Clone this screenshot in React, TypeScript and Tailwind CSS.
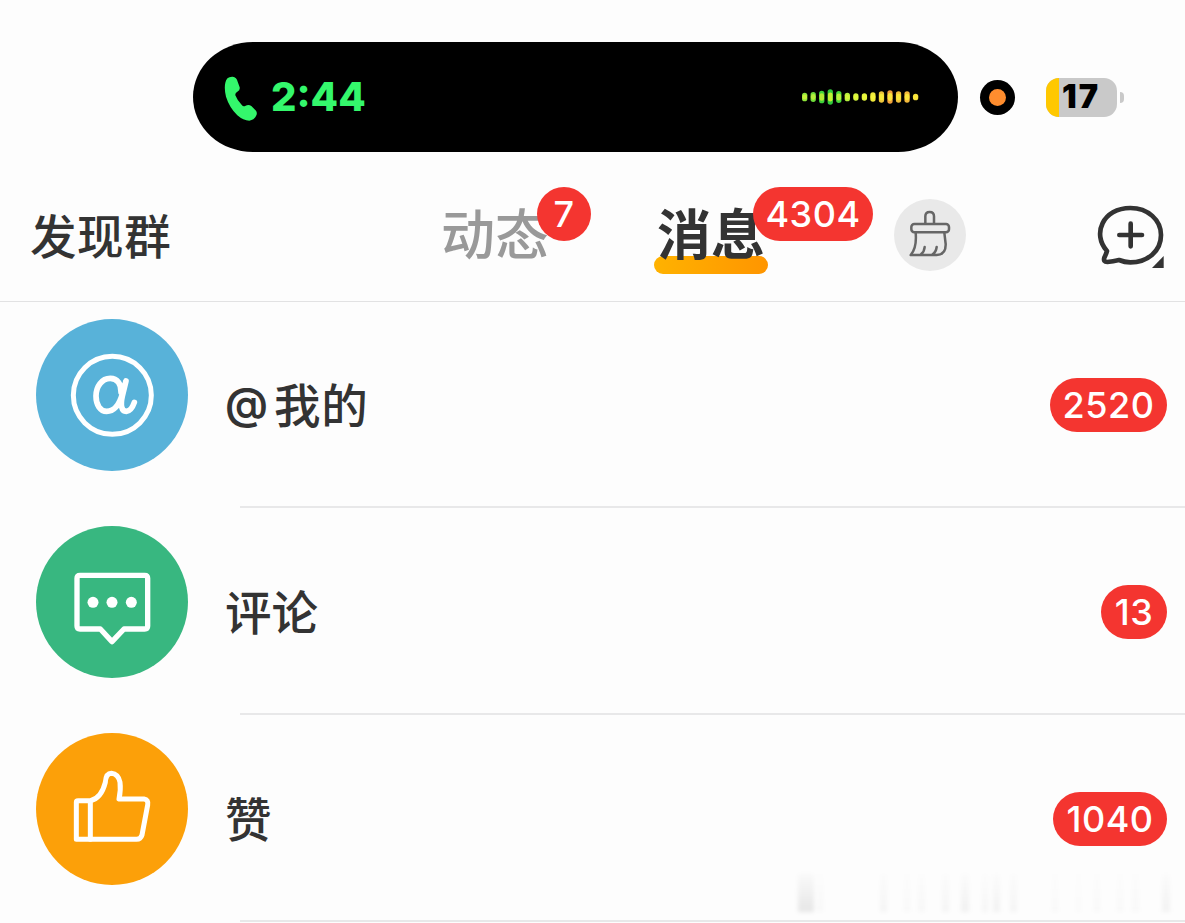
import type { ReactNode } from 'react';
import clsx from 'clsx';

const WAVE = [
  { h: 26, outer: '#8fe53a', inner: '#c8f23c' },
  { h: 30, outer: '#6fdc3a', inner: '#b6ee3c' },
  { h: 38, outer: '#3fd23a', inner: '#b4ea34' },
  { h: 46, outer: '#2fc83a', inner: '#c2ee34' },
  { h: 36, outer: '#46d63a', inner: '#b6ee3c' },
  { h: 26, outer: '#b4ee3c', inner: '#d2f43c' },
  { h: 22, outer: '#d2f43c', inner: '#e2f63c' },
  { h: 22, outer: '#e2f63c', inner: '#eaf63c' },
  { h: 28, outer: '#eee63a', inner: '#f6f23c' },
  { h: 34, outer: '#eec63a', inner: '#f8ea3c' },
  { h: 40, outer: '#f0a03c', inner: '#fae63c' },
  { h: 34, outer: '#f0c03a', inner: '#f8e63c' },
  { h: 34, outer: '#f2b83a', inner: '#fae43c' },
  { h: 20, outer: '#f6e03a', inner: '#fae63c' },
];

const SMUDGES = [
  { x: 18, w: 16, o: 0.09 },
  { x: 38, w: 5, o: 0.025 },
  { x: 100, w: 7, o: 0.035 },
  { x: 124, w: 6, o: 0.02 },
  { x: 138, w: 7, o: 0.025 },
  { x: 162, w: 7, o: 0.035 },
  { x: 181, w: 8, o: 0.05 },
  { x: 202, w: 6, o: 0.03 },
  { x: 213, w: 7, o: 0.045 },
  { x: 230, w: 7, o: 0.035 },
  { x: 272, w: 6, o: 0.02 },
  { x: 296, w: 5, o: 0.015 },
  { x: 314, w: 6, o: 0.02 },
  { x: 337, w: 6, o: 0.02 },
  { x: 352, w: 7, o: 0.02 },
  { x: 382, w: 8, o: 0.045 },
];

function PhoneIcon() {
  return (
    <svg width="34" height="46" viewBox="132 138 102 138" fill="#34f76c">
      <path d="M136 158Q139 139 158 140Q170 142 173 155L179 172Q181 181 172 185Q165 189 166 196Q172 212 186 226Q190 231 197 227Q206 222 214 228L228 242Q233 249 228 258Q222 270 208 272Q190 272 172 256Q148 232 138 200Q132 175 136 158Z" />
    </svg>
  );
}

function Waveform() {
  return (
    <svg width="120" height="18" viewBox="64 172 360 54">
      {WAVE.map((bar, i) => {
        const x = 75 + i * 25.6;
        return (
          <g key={i}>
            <rect x={x - 8} y={199 - bar.h / 2} width="16" height={bar.h} rx="8" fill={bar.outer} />
            <rect x={x - 7} y={199 - bar.h / 3.4} width="14" height={bar.h / 1.7} rx="7" fill={bar.inner} />
          </g>
        );
      })}
    </svg>
  );
}

function StatusBar() {
  return (
    <div className="flex h-[170px] items-start pl-[193px] pt-[42px]">
      <div className="flex h-[110px] w-[765px] items-center rounded-[60px/55px] bg-black pl-[31px] pr-[37px]">
        <span className="mt-1 flex">
          <PhoneIcon />
        </span>
        <span className="ml-[13px] text-[40px] font-extrabold leading-none text-[#34f76c]">2:44</span>
        <span className="ml-auto flex">
          <Waveform />
        </span>
      </div>
      <div className="ml-[22px] mt-[38px] flex size-[35px] items-center justify-center rounded-full bg-black">
        <div className="size-[17px] rounded-full bg-[#ff8d2e]" />
      </div>
      <div className="ml-[31px] mt-9 flex h-[39px] w-[71px] items-center overflow-hidden rounded-[13px] bg-[#c9c9c9]">
        <div className="h-full w-[13px] bg-[#ffc800]" />
        <span className="ml-[3px] text-[32.5px] font-black leading-none tracking-[2px] text-black">17</span>
      </div>
      <div className="ml-[3px] mt-[50px] h-[11px] w-1 rounded-r-full bg-[#c9c9c9]" />
    </div>
  );
}

function Badge({ count, className }: { count: number; className?: string }) {
  return (
    <span
      className={clsx(
        'flex h-[54px] items-center justify-center rounded-full bg-[#f43530] text-[36px] font-medium leading-none tracking-[0.5px] text-white',
        className,
      )}
    >
      {count}
    </span>
  );
}

function BroomIcon() {
  return (
    <svg
      width="72"
      height="72"
      viewBox="462 87 216 216"
      fill="none"
      stroke="#666"
      strokeWidth="7.5"
      strokeLinecap="round"
      strokeLinejoin="round"
    >
      <path d="M556 161V139Q556 126 569 126T582 139V161" />
      <rect x="514" y="162" width="113" height="25" rx="9" />
      <path d="M527 188Q531 235 512 255H590Q618 254 617 222L613 188M554 231Q553 245 543 253M590 231Q588 247 577 254" />
    </svg>
  );
}

function NewChatIcon() {
  return (
    <svg width="68" height="66" viewBox="1072 102 204 198" fill="none" stroke="#333" strokeWidth="14">
      <path
        d="M1102 243C1056 192 1090 114 1172 114C1225 114 1264 150 1264 195C1264 245 1222 277 1172 277Q1155 277 1138 270Q1120 274 1103 276Q1090 276 1094 263Q1099 253 1102 243Z"
        strokeLinejoin="round"
      />
      <path d="M1139 195H1207M1173 161V229" strokeLinecap="round" />
      <path d="M1272 258V294H1237Z" fill="#333" stroke="none" />
    </svg>
  );
}

function Header() {
  return (
    <header className="flex h-[132px] items-start border-b border-[#e2e2e3] text-[#333]">
      <span className="ml-[30px] mt-[37px] w-[411px] text-[46.5px] font-medium leading-[60px] tracking-[0.6px]">
        发现群
      </span>
      <div className="relative mt-[32px] w-[108px]">
        <span className="text-[54px] font-medium leading-[68px] text-[#999]">动态</span>
        <Badge count={7} className="absolute -top-[15px] left-24 w-[54px]" />
      </div>
      <div className="relative ml-[108px] mt-[32px] w-[108px]">
        <span className="absolute -left-[3px] top-[54px] h-[18px] w-[114px] rounded-full bg-linear-to-r from-[#ffb200] to-[#ff9500]" />
        <span className="relative text-[54px] font-bold leading-[68px]">消息</span>
        <Badge count={4304} className="absolute -top-[15px] left-24 w-[120px]" />
      </div>
      <div className="ml-[129px] mt-[29px] size-[72px] rounded-full bg-[#e9e9e9]">
        <BroomIcon />
      </div>
      <div className="ml-[131px] mt-[34px]">
        <NewChatIcon />
      </div>
    </header>
  );
}

function AtGlyph() {
  return (
    <g transform="translate(-48 -27)" strokeWidth="15">
      <circle cx="277" cy="256" r="117" />
      <path
        d="M303 246C304 222 292 205 271 205C245 205 228 230 228 258C228 285 241 304 260 304C284 304 299 280 307 252L318 213L307 258C301 285 304 304 319 304Q334 303 343 277"
        strokeWidth="17"
      />
    </g>
  );
}

function CommentGlyph() {
  return (
    <g transform="translate(-48 -33)" strokeWidth="16">
      <path d="M180 181H374Q383 181 383 190V333Q383 342 374 342H312L276 380L241 342H180Q171 342 171 333V190Q171 181 180 181Z" />
      <g fill="#fff" stroke="none">
        <circle cx="219" cy="262" r="16.5" />
        <circle cx="276" cy="262" r="16.5" />
        <circle cx="334" cy="262" r="16.5" />
      </g>
    </g>
  );
}

function LikeGlyph() {
  return (
    <g transform="translate(-48 -24)" strokeWidth="15">
      <path d="M169 343V232Q169 227 174 227H211Q244 220 256 172Q258 145 274 145Q295 147 300 172Q303 195 297 222H372Q386 224 383 240L366 330Q362 343 350 343Z" />
      <path d="M211 230V343" />
    </g>
  );
}

interface RowProps {
  label: ReactNode;
  count: number;
  color: string;
  badge: string;
  children: ReactNode;
}

function Row({ label, count, color, badge, children }: RowProps) {
  return (
    <li className="h-[207px]">
      <div className="flex h-[204px] pl-9 pr-[18px]">
        <div className={clsx('mt-[17px] size-[152px] rounded-full', color)}>
          <svg width="152" height="152" viewBox="0 0 456 456" fill="none" stroke="#fff" strokeLinecap="round" strokeLinejoin="round">
            {children}
          </svg>
        </div>
        <span className="ml-[37px] mt-[74px] text-[46.5px] font-medium leading-[60px] text-[#333]">{label}</span>
        <Badge count={count} className={clsx('ml-auto mt-[76px]', badge)} />
      </div>
      <div className="ml-60 h-[2px] bg-[#e8e8e9]" />
    </li>
  );
}

export default function App() {
  return (
    <div className="relative h-[923px] w-[1185px] overflow-hidden bg-[#fdfdfd] font-['Inter','Noto_Sans_CJK_SC',sans-serif]">
      <StatusBar />
      <Header />
      <ul>
        <Row
          label={
            <>
              <span className="mr-[6px] align-[4px] text-[43px] font-semibold leading-none">@</span>
              <span className="tracking-[0.8px]">我的</span>
            </>
          }
          count={2520}
          color="bg-[#58b2d9]"
          badge="w-[117px]"
        >
          <AtGlyph />
        </Row>
        <Row label="评论" count={13} color="bg-[#38b780]" badge="w-[66px]">
          <CommentGlyph />
        </Row>
        <Row label="赞" count={1040} color="bg-[#fca009]" badge="w-[114px]">
          <LikeGlyph />
        </Row>
      </ul>
      {/* faded watermark streaks */}
      <svg className="absolute left-[780px] top-[872px] blur-[2px]" width="405" height="41">
        <defs>
          <linearGradient id="streak" x1="0" y1="0" x2="0" y2="1">
            <stop offset="0" stopColor="#000" stopOpacity="0.15" />
            <stop offset="1" stopColor="#000" />
          </linearGradient>
        </defs>
        {SMUDGES.map((s) => (
          <rect key={s.x} x={s.x} y="2" width={s.w} height="38" fill="url(#streak)" opacity={s.o} />
        ))}
      </svg>
    </div>
  );
}
